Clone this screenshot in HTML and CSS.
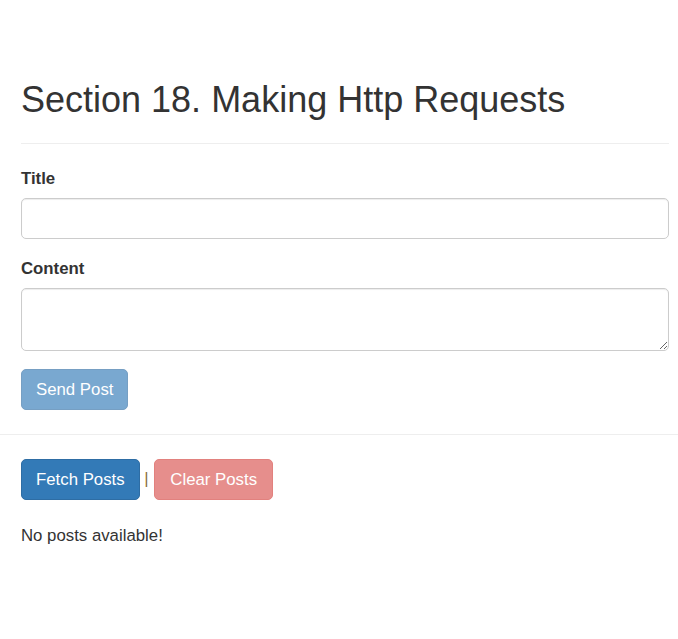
FILE: index.html
```html
<!DOCTYPE html>
<html lang="en">
<head>
<meta charset="utf-8">
<title>Making Http Requests</title>
<link rel="stylesheet" href="styles.css">
</head>
<body>
<div class="wrap top">
  <div class="page-header">
    <h1>Section 18. Making Http Requests</h1>
  </div>
  <form class="post-form">
    <div class="form-group">
      <label for="title">Title</label>
      <input type="text" id="title" class="form-control">
    </div>
    <div class="form-group">
      <label for="content">Content</label>
      <textarea id="content" class="form-control" rows="2"></textarea>
    </div>
    <button type="button" class="btn btn-primary" disabled>Send Post</button>
  </form>
</div>
<hr class="divider">
<div class="wrap">
  <div class="actions">
    <button type="button" class="btn btn-primary">Fetch Posts</button> <span class="sep">|</span> <button type="button" class="btn btn-danger btn-clear" disabled>Clear Posts</button>
  </div>
  <p class="empty">No posts available!</p>
</div>
</body>
</html>
```
FILE: styles.css
```css
html, body {
  margin: 0;
  padding: 0;
  background: #fff;
}
body {
  font-family: "Liberation Sans", Arial, Helvetica, sans-serif;
  font-size: 16.8px;
  line-height: 24px;
  color: #333;
}
.wrap {
  padding: 0 9px 0 21px;
}
.top {
  padding-top: 80px;
}
.page-header {
  padding-bottom: 11px;
  margin-bottom: 23px;
  border-bottom: 1px solid #eee;
}
h1 {
  margin: 0 0 12px;
  font-size: 36px;
  font-weight: normal;
  line-height: 39.6px;
  color: #333;
}
.form-group {
  margin-bottom: 18px;
}
label {
  display: block;
  font-weight: bold;
  margin-bottom: 7px;
}
.form-control {
  display: block;
  box-sizing: border-box;
  width: 100%;
  margin: 0;
  padding: 7px 14px;
  font-family: inherit;
  font-size: 16.8px;
  line-height: 24px;
  color: #555;
  background: #fff;
  border: 1px solid #ccc;
  border-radius: 5px;
  box-shadow: inset 0 1px 1px rgba(0,0,0,.075);
}
input.form-control {
  height: 41px;
}
textarea.form-control {
  height: 63px;
  resize: vertical;
}
.btn {
  display: inline-block;
  box-sizing: border-box;
  height: 41px;
  margin: 0;
  padding: 7px 14px;
  font-family: inherit;
  font-size: 16.8px;
  line-height: 25px;
  color: #fff;
  border: 1px solid transparent;
  border-radius: 5px;
  vertical-align: middle;
  cursor: pointer;
}
.btn[disabled] {
  opacity: .65;
  cursor: not-allowed;
}
.btn-primary {
  background: #337ab7;
  border-color: #2e6da4;
}
.btn-danger {
  background: #d9534f;
  border-color: #d43f3a;
}
.btn-clear {
  padding: 7px 15px;
}
.divider {
  margin: 24px 0;
  border: 0;
  border-top: 1px solid #eee;
  height: 0;
}
.actions {
  line-height: 24px;
}
.sep {
  color: #8a6d3b;
  vertical-align: middle;
  margin-right: 1px;
}
.empty {
  margin: 24px 0 0;
}
```
